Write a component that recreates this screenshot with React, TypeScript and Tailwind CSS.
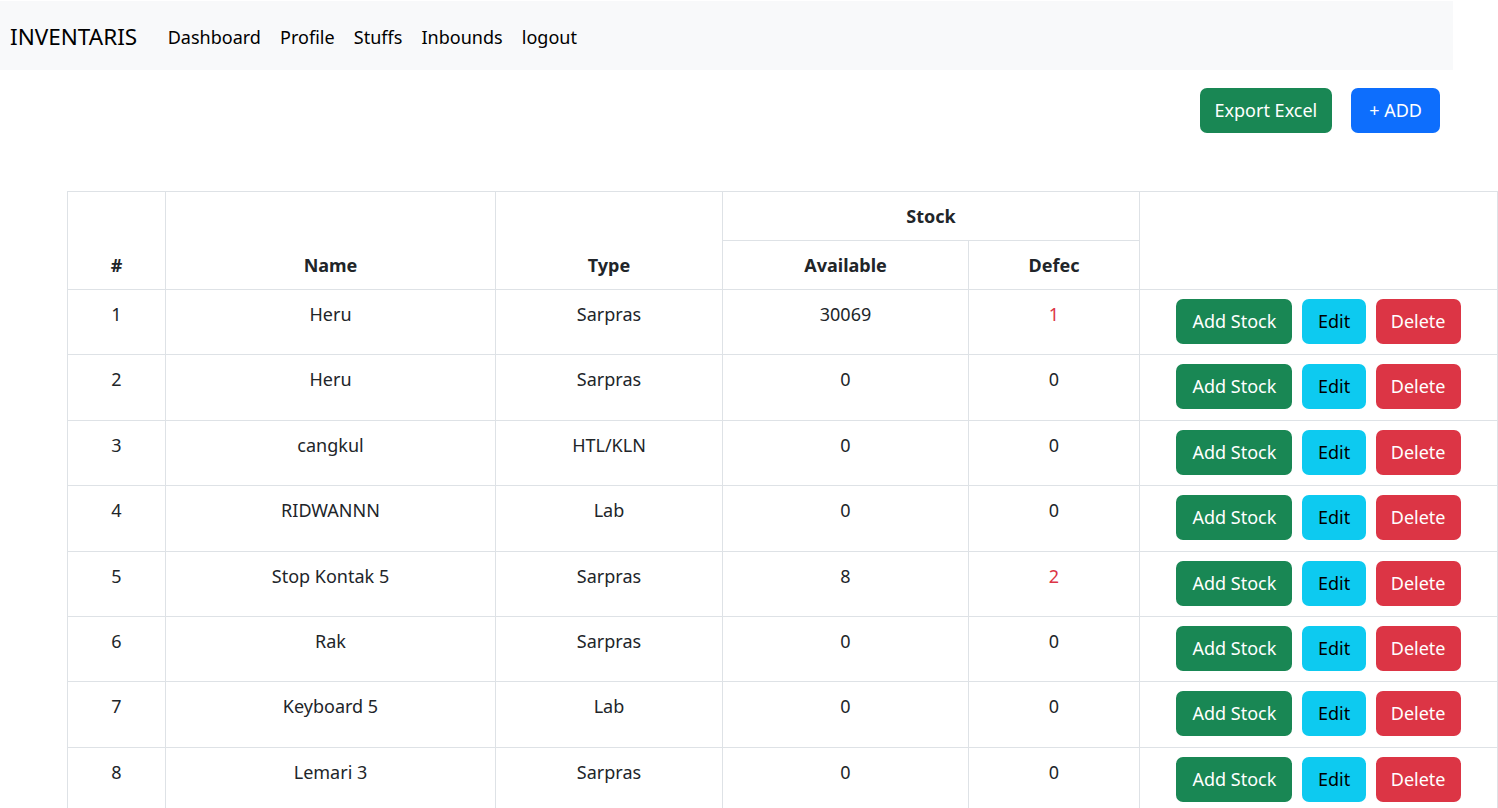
import React from "react";

type Row = { name: string; type: string; avail: number; defec: number };

const rows: Row[] = [
  { name: "Heru", type: "Sarpras", avail: 30069, defec: 1 },
  { name: "Heru", type: "Sarpras", avail: 0, defec: 0 },
  { name: "cangkul", type: "HTL/KLN", avail: 0, defec: 0 },
  { name: "RIDWANNN", type: "Lab", avail: 0, defec: 0 },
  { name: "Stop Kontak 5", type: "Sarpras", avail: 8, defec: 2 },
  { name: "Rak", type: "Sarpras", avail: 0, defec: 0 },
  { name: "Keyboard 5", type: "Lab", avail: 0, defec: 0 },
  { name: "Lemari 3", type: "Sarpras", avail: 0, defec: 0 },
];

const btn =
  "inline-block h-[45px] rounded-[7px] text-[18px] leading-[28.8px] border border-transparent";

export default function App() {
  return (
    <div className="min-h-screen bg-white text-[#212529] font-['Segoe_UI','Noto_Sans',sans-serif] text-[18px] leading-[28.8px] overflow-hidden">
      <nav className="w-[1453px] h-[69px] mt-px bg-[#f8f9fa] flex items-center pl-[10px] pt-[3px]">
        <span className="text-[22.5px] leading-[36px] mr-[21px] text-black">INVENTARIS</span>
        <div className="flex items-center">
          {["Dashboard", "Profile", "Stuffs", "Inbounds", "logout"].map((l) => (
            <a key={l} className="px-[9.6px] text-black cursor-pointer">
              {l}
            </a>
          ))}
        </div>
      </nav>

      <div className="w-[1453px] flex justify-end gap-[19px] pr-[13px] mt-[18px]">
        <button className={`${btn} px-[14px] bg-[#198754] text-white`}>Export Excel</button>
        <button className={`${btn} px-[17px] bg-[#0d6efd] text-white`}>+ ADD</button>
      </div>

      <div className="ml-[67px] mt-[58px] w-[1430px]">
        <table className="w-[1430px] border-collapse table-fixed text-center">
          <colgroup>
            <col className="w-[98px]" />
            <col className="w-[330px]" />
            <col className="w-[227px]" />
            <col className="w-[246px]" />
            <col className="w-[171px]" />
            <col className="w-[358px]" />
          </colgroup>
          <thead className="align-bottom">
            <tr className="h-[49px]">
              <th rowSpan={2} className="border border-[#dee2e6] p-[9.6px] font-bold">#</th>
              <th rowSpan={2} className="border border-[#dee2e6] p-[9.6px] font-bold">Name</th>
              <th rowSpan={2} className="border border-[#dee2e6] p-[9.6px] font-bold">Type</th>
              <th colSpan={2} className="border border-[#dee2e6] py-[9.6px] font-bold">Stock</th>
              <th rowSpan={2} className="border border-[#dee2e6] p-[9.6px]"></th>
            </tr>
            <tr className="h-[49px]">
              <th className="border border-[#dee2e6] py-[9.6px] font-bold">Available</th>
              <th className="border border-[#dee2e6] py-[9.6px] font-bold">Defec</th>
            </tr>
          </thead>
          <tbody className="align-top">
            {rows.map((r, i) => (
              <tr key={i} className="h-[65.4px]">
                <td className="border border-[#dee2e6] px-[9.6px] pt-[10px]">{i + 1}</td>
                <td className="border border-[#dee2e6] px-[9.6px] pt-[10px]">{r.name}</td>
                <td className="border border-[#dee2e6] px-[9.6px] pt-[10px]">{r.type}</td>
                <td className="border border-[#dee2e6] px-[9.6px] pt-[10px]">{r.avail}</td>
                <td
                  className={`border border-[#dee2e6] px-[9.6px] pt-[10px] ${
                    r.defec > 0 ? "text-[#dc3545]" : ""
                  }`}
                >
                  {r.defec}
                </td>
                <td className="border border-[#dee2e6] px-[9.6px] pt-[9px]">
                  <div className="flex justify-center gap-[9.6px]">
                    <button className={`${btn} px-[15px] bg-[#198754] text-white`}>Add Stock</button>
                    <button className={`${btn} px-[15px] bg-[#0dcaf0] text-black`}>Edit</button>
                    <button className={`${btn} px-[14px] bg-[#dc3545] text-white`}>Delete</button>
                  </div>
                </td>
              </tr>
            ))}
          </tbody>
        </table>
      </div>
    </div>
  );
}
